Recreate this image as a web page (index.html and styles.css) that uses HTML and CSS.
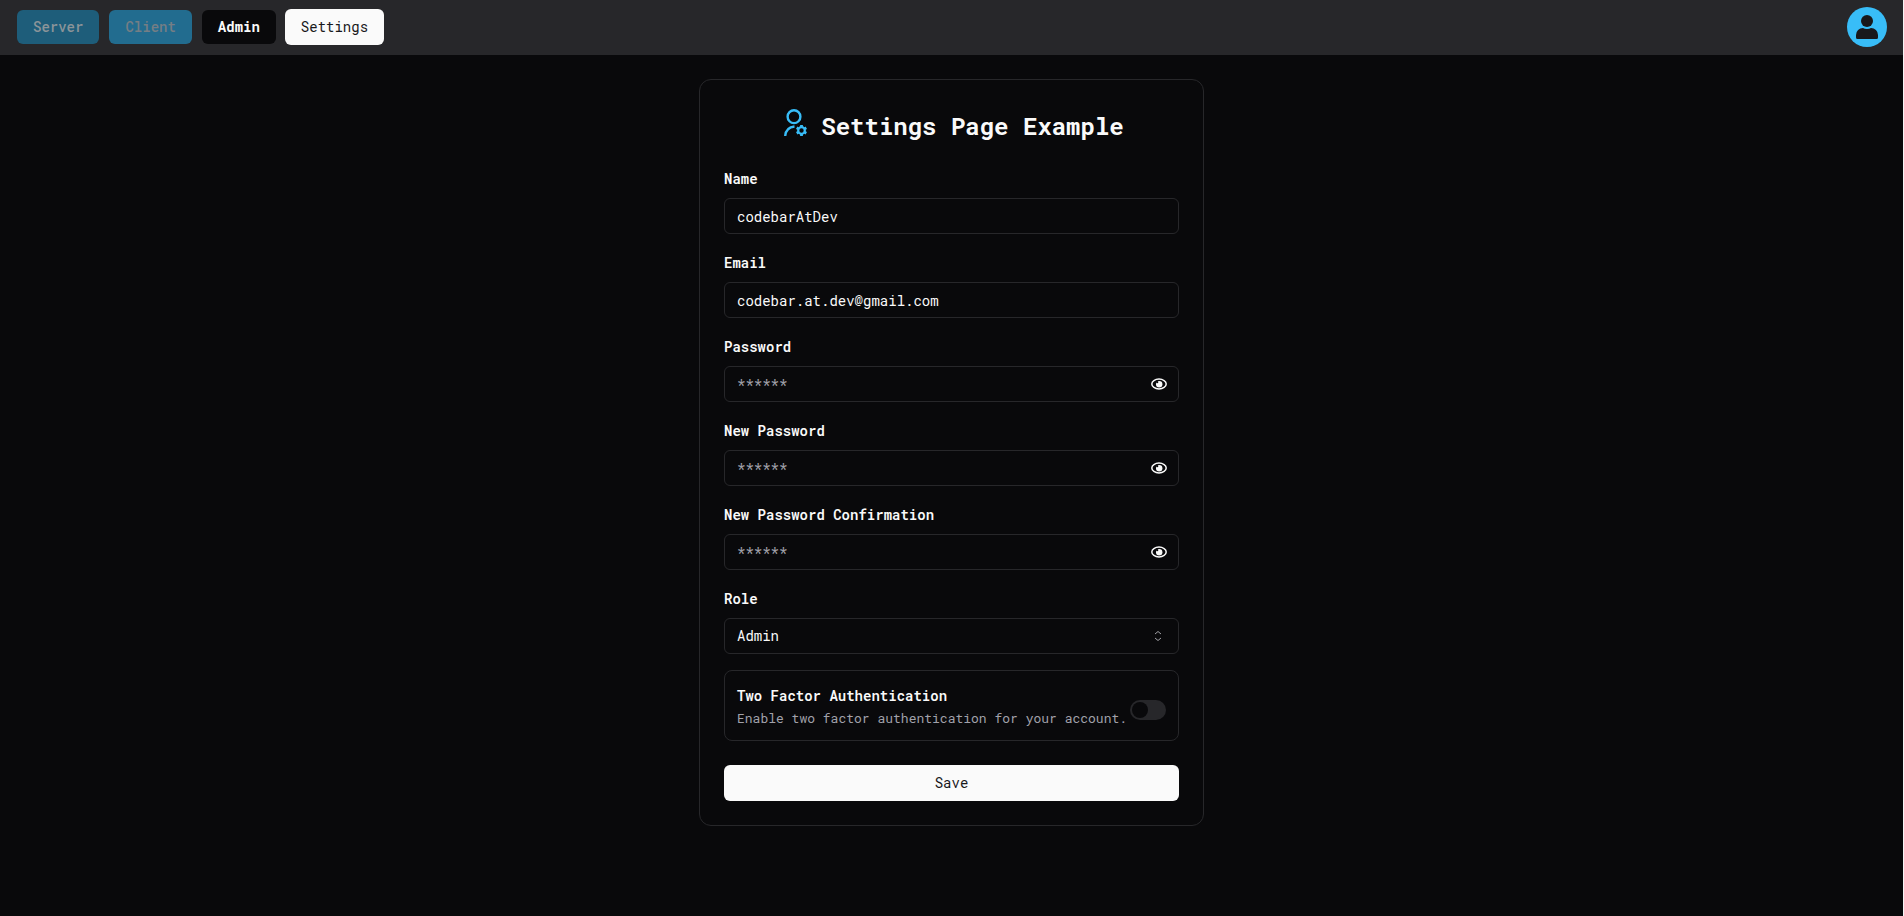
FILE: index.html
```html
<!DOCTYPE html>
<html lang="en">
<head>
<meta charset="utf-8">
<title>Settings</title>
<link rel="stylesheet" href="styles.css">
</head>
<body>
<svg class="sprite" aria-hidden="true">
  <symbol id="eye" viewBox="0 0 16 16">
    <ellipse cx="8" cy="8" rx="7.2" ry="4.9" fill="none" stroke="currentColor" stroke-width="1.500"/>
    <circle cx="8.200" cy="8.200" r="3.200" fill="currentColor"/>
    <circle cx="6.200" cy="6.200" r="1.100" fill="#09090b"/>
  </symbol>
</svg>
<header class="navbar">
  <nav class="nav-links">
    <button class="btn btn-server" disabled>Server</button>
    <button class="btn btn-client" disabled>Client</button>
    <button class="btn btn-admin">Admin</button>
    <button class="btn btn-active">Settings</button>
  </nav>
  <button class="avatar" aria-label="Account">
    <svg viewBox="0 0 40 40" aria-hidden="true"><circle cx="20" cy="14" r="6"/><path d="M9 30.500v-2.500a7 7 0 0 1 7-7q1.500 1 4 1t4-1a7 7 0 0 1 7 7v2.500q0 1.500-1.500 1.500h-19q-1.500 0-1.500-1.500z"/></svg>
  </button>
</header>
<main class="page">
  <form class="card">
    <h1 class="title">
      <svg class="title-icon" viewBox="0 0 32 32" fill="none" stroke="currentColor" stroke-width="2.400" aria-hidden="true">
        <circle cx="15" cy="10.700" r="6.400"/>
        <path d="M6.200 30c.5-5.500 3.800-9 9.300-9.500"/>
        <circle cx="22.500" cy="24.500" r="3.300" stroke-width="2.200"/>
        <path stroke-width="2.800" d="M22.500 21.200v-2.200M22.500 27.800v2.200M25.400 22.900l1.900-1.100M19.600 26.100l-1.900 1.100M25.400 26.100l1.900 1.100M19.600 22.900l-1.900-1.100"/>
      </svg>
      <span>Settings Page Example</span>
    </h1>
    <div class="fields">
      <div class="field">
        <label for="name">Name</label>
        <input class="control" id="name" type="text" value="codebarAtDev">
      </div>
      <div class="field">
        <label for="email">Email</label>
        <input class="control" id="email" type="email" value="codebar.at.dev@gmail.com">
      </div>
      <div class="field">
        <label for="password">Password</label>
        <div class="control-wrap">
          <input class="control" id="password" type="password" placeholder="******">
          <button class="reveal" type="button" aria-label="Show password"><svg aria-hidden="true"><use href="#eye"/></svg></button>
        </div>
      </div>
      <div class="field">
        <label for="new-password">New Password</label>
        <div class="control-wrap">
          <input class="control" id="new-password" type="password" placeholder="******">
          <button class="reveal" type="button" aria-label="Show new password"><svg aria-hidden="true"><use href="#eye"/></svg></button>
        </div>
      </div>
      <div class="field">
        <label for="confirm">New Password Confirmation</label>
        <div class="control-wrap">
          <input class="control" id="confirm" type="password" placeholder="******">
          <button class="reveal" type="button" aria-label="Show password confirmation"><svg aria-hidden="true"><use href="#eye"/></svg></button>
        </div>
      </div>
      <div class="field">
        <label for="role">Role</label>
        <div class="control-wrap">
          <select class="control" id="role"><option>Admin</option><option>User</option></select>
          <svg class="carets" viewBox="0 0 16 16" fill="none" stroke="currentColor" aria-hidden="true"><path d="M5 6 8 3.500l3 2.500M5 10 8 12.500l3-2.500"/></svg>
        </div>
      </div>
      <div class="two-factor">
        <div class="two-factor-text">
          <label for="tfa">Two Factor Authentication</label>
          <p id="tfa-hint">Enable two factor authentication for your account.</p>
        </div>
        <input class="switch" id="tfa" type="checkbox" role="switch" aria-describedby="tfa-hint">
      </div>
    </div>
    <button class="btn save" type="button">Save</button>
  </form>
</main>
</body>
</html>
```
FILE: styles.css
```css
* {
  box-sizing: border-box;
}

html {
  background: #f4f4f5;
}

body {
  margin: 0 1px 0 0;
  min-height: 100vh;
  background: #09090b;
  color: #fafafa;
  font-family: "Roboto Mono", "DejaVu Sans Mono", "Liberation Mono", monospace;
  font-size: 14px;
  line-height: 20px;
}

button,
input,
select {
  font: inherit;
  color: inherit;
}

.sprite {
  position: absolute;
  width: 0;
  height: 0;
}

.navbar {
  display: flex;
  align-items: center;
  justify-content: space-between;
  height: 55px;
  padding: 0 16px;
  border-bottom: 1px solid #27272a;
  background: #27272a;
}

.nav-links {
  display: flex;
  align-items: center;
  gap: 8px;
}

.btn {
  height: 34px;
  margin: 1px;
  padding: 0 16px;
  border: 0;
  border-radius: 6px;
}

.btn-server {
  background: #1e5d7a;
  color: #8b9499;
  font-weight: 500;
}

.btn-client {
  background: #226c8f;
  color: #757e85;
  font-weight: 500;
}

.btn-admin {
  background: #09090b;
  font-weight: 700;
}

.btn-active {
  height: 36px;
  margin: 0;
  background: #fafafa;
  color: #18181b;
}

.avatar {
  width: 40px;
  height: 40px;
  padding: 0;
  border: 0;
  border-radius: 50%;
  background: #38bdf8;
  color: #18181b;
}

.avatar svg {
  display: block;
  fill: currentColor;
}

.page {
  display: flex;
  justify-content: center;
  padding: 24px;
}

.card {
  width: 100%;
  max-width: 505px;
  padding: 24px;
  border: 1px solid #27272a;
  border-radius: 12px;
}

.title {
  display: flex;
  align-items: flex-end;
  justify-content: center;
  gap: 10px;
  height: 38px;
  margin: 0 0 24px;
  font-size: 24px;
  line-height: 32px;
  font-weight: 700;
}

.title-icon {
  align-self: flex-start;
  width: 32px;
  height: 36px;
  color: #38bdf8;
}

.fields {
  display: grid;
  gap: 16px;
}

.field {
  display: grid;
  gap: 6px;
}

.field label,
.two-factor label {
  display: block;
  font-weight: 600;
  line-height: 26px;
}

.control {
  display: block;
  width: 100%;
  height: 36px;
  padding: 0 12px;
  border: 1px solid #27272a;
  border-radius: 6px;
  background: transparent;
  appearance: none;
}

.control::placeholder {
  color: #a1a1aa;
  opacity: 1;
}

.control-wrap {
  position: relative;
}

.reveal {
  position: absolute;
  top: 10px;
  right: 12px;
  width: 16px;
  height: 16px;
  padding: 0;
  border: 0;
  background: none;
}

.reveal svg {
  display: block;
  width: 16px;
  height: 16px;
}

.carets {
  position: absolute;
  top: 10px;
  right: 13px;
  width: 16px;
  height: 16px;
  color: #a1a1a6;
  pointer-events: none;
}

.two-factor {
  display: flex;
  align-items: center;
  justify-content: space-between;
  padding: 12px;
  border: 1px solid #27272a;
  border-radius: 8px;
}

.two-factor p {
  margin: 0;
  color: #a1a1aa;
  font-size: 13px;
  line-height: 19px;
}

.switch {
  flex: none;
  display: flex;
  align-items: center;
  width: 36px;
  height: 20px;
  margin: 8px 0 0;
  padding: 2px;
  border-radius: 10px;
  background: #27272a;
  appearance: none;
}

.switch::before {
  content: "";
  width: 16px;
  height: 16px;
  border-radius: 50%;
  background: #09090b;
}

.switch:checked::before {
  margin-left: auto;
}

.save {
  width: 100%;
  height: 36px;
  margin: 24px 0 0;
  background: #fafafa;
  color: #18181b;
}
```
